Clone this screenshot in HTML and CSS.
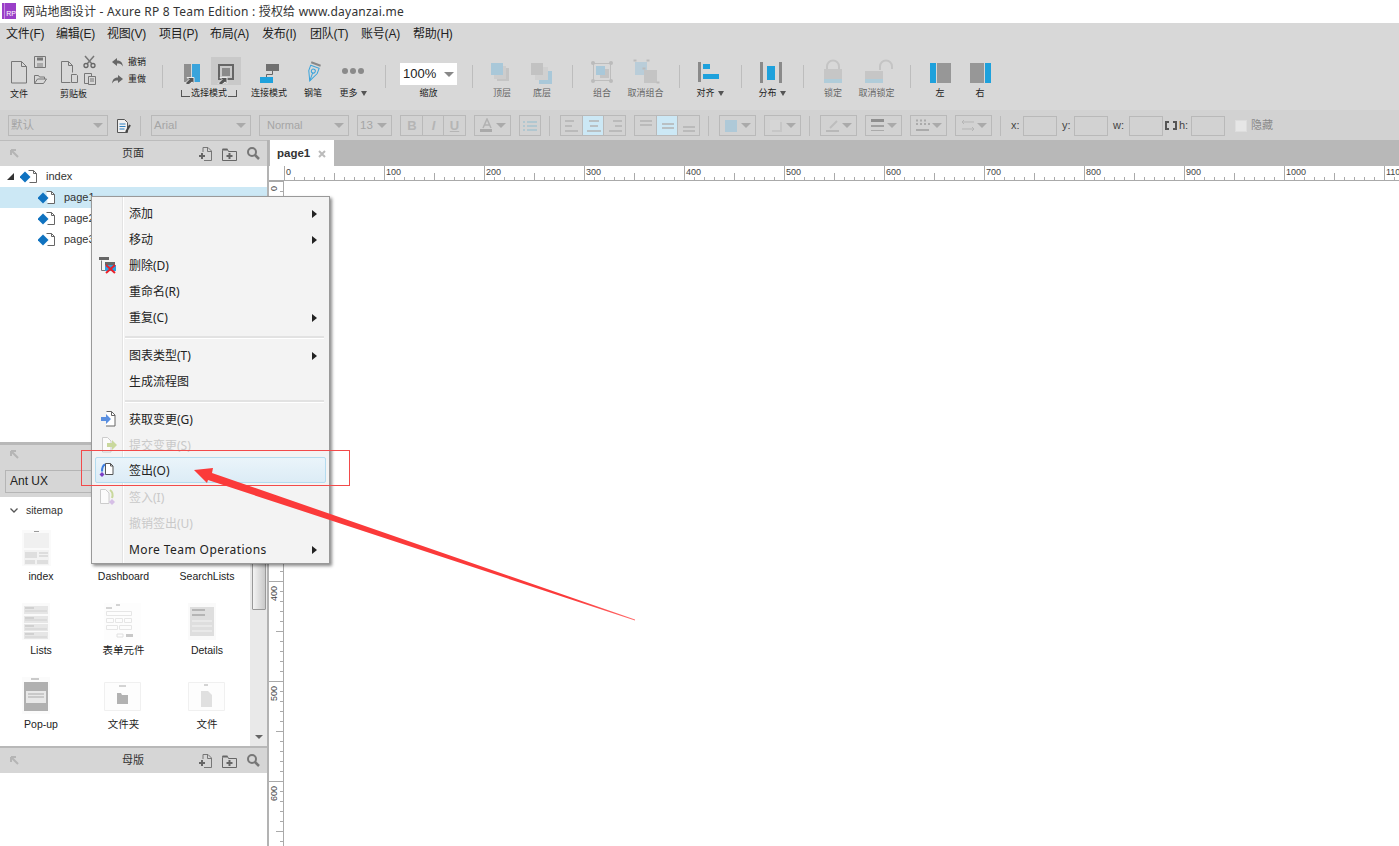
FILE: index.html
```html
<!DOCTYPE html>
<html lang="zh-CN">
<head>
<meta charset="utf-8">
<title>网站地图设计 - Axure RP 8 Team Edition</title>
<link rel="stylesheet" href="styles.css">
</head>
<body>
<svg class="defs" aria-hidden="true">
  <symbol id="tree" viewBox="0 0 18 16">
    <path d="M8.500 1.500h5l3 3v9h-7" fill="#fff" stroke="#666"/>
    <path d="M13.500 1.500v3h3" fill="none" stroke="#666"/>
    <path d="M5 2.500l5.500 5.500-5.500 5.500-5.500-5.500z" fill="#0f72c0"/>
  </symbol>
  <symbol id="back" viewBox="0 0 9 9"><path d="M1 1l7 7M1 1h5M1 1v5" fill="none" stroke="#b5b5b5" stroke-width="2"/></symbol>
  <symbol id="addp" viewBox="0 0 13 14">
    <path d="M4 5V.5h5l3.500 3.500v9.500H5" fill="none" stroke="#777"/><path d="M8.500.5v4h4" fill="none" stroke="#777"/>
    <path d="M3 6v6M0 9h6" stroke="#666" stroke-width="2"/>
  </symbol>
  <symbol id="addf" viewBox="0 0 15 14">
    <path d="M.5 3.500v10h14v-9h-8l-1-2h-5z" fill="none" stroke="#666"/><path d="M.5 2.500h5" stroke="#666" stroke-width="2"/>
    <path d="M7.500 6v6M4.500 9h6" stroke="#666" stroke-width="2"/>
  </symbol>
  <symbol id="find" viewBox="0 0 13 13">
    <circle cx="5" cy="5" r="4" fill="none" stroke="#777" stroke-width="2"/><path d="M8 8l4 4" stroke="#777" stroke-width="2.500"/>
  </symbol>
  <symbol id="cursor" viewBox="0 0 11 10">
    <path d="M1 9.500l4-4-2-2h7v6l-2-1.500-3.500 3z" fill="#555" stroke="#e8e8e8" stroke-width="1"/>
  </symbol>
</svg>

<header class="titlebar">
  <div class="logo"><span class="logo-bar"></span><span class="logo-rp">RP</span></div>
  <span class="title-text">网站地图设计 - Axure RP 8 Team Edition : 授权给 www.dayanzai.me</span>
</header>

<nav class="menubar">
  <span>文件(F)</span><span>编辑(E)</span><span>视图(V)</span><span>项目(P)</span><span>布局(A)</span><span>发布(I)</span><span>团队(T)</span><span>账号(A)</span><span>帮助(H)</span>
</nav>

<section class="toolbar">
  <div class="tool tool-left">
    <svg class="ico" width="50" height="28" viewBox="0 0 50 28">
      <path d="M11.500 4.500h10l5 5v16.500h-15z" fill="none" stroke="#777"/><path d="M21.500 4.500v5h5" fill="none" stroke="#777"/>
      <path d="M34.500-.5h11v11h-11z" fill="none" stroke="#777"/><path d="M37 .5h6v3h-6z" fill="#777"/><path d="M37 6h6v4h-6z" fill="#aaa"/>
      <path d="M34.500 26.500v-8h4l1 1.500h5v2M34.500 26.500l3-4.500h9l-3 4.500z" fill="none" stroke="#777"/>
    </svg>
    <span class="lbl">文件</span>
  </div>
  <div class="tool tool-left">
    <svg class="ico" width="50" height="28" viewBox="0 0 50 28">
      <path d="M11.500 4.500h7l4 4v7M11.500 4.500v21h9" fill="none" stroke="#777"/><path d="M18.500 4.500v4h4" fill="none" stroke="#777"/>
      <path d="M21.500 17.500h5l1 1v7h-6z" fill="#d8d8d8" stroke="#777"/>
      <path d="M35-1l7 8M44-1l-7 8" stroke="#777" stroke-width="1.500"/><circle cx="36" cy="8.500" r="2" fill="none" stroke="#666" stroke-width="1.300"/><circle cx="43" cy="8.500" r="2" fill="none" stroke="#666" stroke-width="1.300"/>
      <path d="M34.500 16.500h7v10h-7z" fill="none" stroke="#777"/><path d="M38.500 19.500h7v8h-7z" fill="#d8d8d8" stroke="#777"/><path d="M40 22h4M40 24h4" stroke="#777"/>
    </svg>
    <span class="lbl">剪贴板</span>
  </div>
  <div class="hist">
    <div class="hist-row"><svg width="11" height="9" viewBox="0 0 11 9"><path d="M0 4l5-4v2.500c3 0 5.500 1.500 6 6-1.500-2.500-3-3-6-3V8z" fill="#666"/></svg><span>撤销</span></div>
    <div class="hist-row"><svg width="11" height="9" viewBox="0 0 11 9"><path d="M11 4L6 0v2.500c-3 0-5.500 1.500-6 6 1.500-2.500 3-3 6-3V8z" fill="#666"/></svg><span>重做</span></div>
  </div>
  <i class="sep"></i>
  <div class="tool t-select">
    <svg class="ico" width="70" height="28" viewBox="0 0 70 28">
      <path d="M39 0h30v28H39z" fill="#c9c9c9"/>
      <path d="M12 7h7v18h-7z" fill="#8f8f8f"/><path d="M20 7h8v18h-8z" fill="#3aa4dc"/>
      <use href="#cursor" x="12" y="17" width="11" height="10"/>
      <path d="M47 8h14v14H47z" fill="none" stroke="#666" stroke-width="2"/><path d="M50 11h8v8h-8z" fill="#8a8a8a"/>
      <use href="#cursor" x="45" y="17" width="11" height="10"/>
    </svg>
    <span class="lbl lbl-bracket">选择模式</span>
  </div>
  <div class="tool t-connect">
    <svg class="ico" width="54" height="28" viewBox="0 0 54 28">
      <path d="M24 7h13v7H24z" fill="#707070"/><path d="M30.500 14v3.500h-6V20" fill="none" stroke="#666"/><path d="M18 20h13v6H18z" fill="#1ea1dc"/>
    </svg>
    <span class="lbl">连接模式</span>
  </div>
  <div class="tool t-pen">
    <svg class="ico" width="34" height="28" viewBox="0 0 34 28">
      <g transform="rotate(20 17 15)">
        <path d="M12.500 9.500h9v5.500l-4.500 9.500-4.500-9.500z" fill="none" stroke="#3aa4dc"/>
        <circle cx="17" cy="14" r="2" fill="none" stroke="#3aa4dc"/><path d="M17 16v8" stroke="#3aa4dc"/>
        <path d="M12 5.500h10v2H12z" fill="#888"/>
      </g>
    </svg>
    <span class="lbl">钢笔</span>
  </div>
  <div class="tool t-more">
    <svg class="ico" width="46" height="28" viewBox="0 0 46 28"><circle cx="15" cy="14" r="3" fill="#8a8a8a"/><circle cx="23" cy="14" r="3" fill="#8a8a8a"/><circle cx="31" cy="14" r="3" fill="#8a8a8a"/></svg>
    <span class="lbl">更多<b class="drop"></b></span>
  </div>
  <i class="sep sep-tight"></i>
  <div class="tool t-zoom">
    <div class="zoom-box"><span>100%</span><b class="caret caret-dark"></b></div>
    <span class="lbl">缩放</span>
  </div>
  <i class="sep"></i>
  <div class="tool dim">
    <svg class="ico" width="40" height="28" viewBox="0 0 40 28"><path d="M15 11h12v13H15z" fill="#c4c4c4"/><path d="M12 9h12v13H12z" fill="#cdcdcd"/><path d="M9 6h12v12H9z" fill="#a9c8d9"/></svg>
    <span class="lbl">顶层</span>
  </div>
  <div class="tool dim">
    <svg class="ico" width="40" height="28" viewBox="0 0 40 28"><path d="M17 14h13v13H17z" fill="#a9c8d9"/><path d="M13 10h13v13H13z" fill="#d0d0d0"/><path d="M9 6h12v12H9z" fill="#c2c2c2"/></svg>
    <span class="lbl">底层</span>
  </div>
  <i class="sep"></i>
  <div class="tool dim">
    <svg class="ico" width="40" height="28" viewBox="0 0 40 28"><path d="M11.500 6.500h17v17h-17z" fill="none" stroke="#bdbdbd"/><path d="M18 12h9v9h-9z" fill="#c4c4c4"/><path d="M14 9h9v9h-9z" fill="#a9c8d9"/><circle cx="11" cy="6" r="2" fill="#bbb"/><circle cx="29" cy="6" r="2" fill="#bbb"/><circle cx="11" cy="24" r="2" fill="#bbb"/><circle cx="29" cy="24" r="2" fill="#bbb"/></svg>
    <span class="lbl">组合</span>
  </div>
  <div class="tool t-w47 dim">
    <svg class="ico" width="47" height="28" viewBox="0 0 47 28"><path d="M13 5h12v13H13z" fill="#b9cdd9"/><path d="M22 13h13v13H22z" fill="#c4c4c4"/><path d="M11.500 3.500h3M24.500 3.500h3M20.500 11.500h3M34.500 25.500h3" stroke="#bbb" stroke-width="2"/></svg>
    <span class="lbl">取消组合</span>
  </div>
  <i class="sep"></i>
  <div class="tool t-w42">
    <svg class="ico" width="42" height="28" viewBox="0 0 42 28"><path d="M9 5h3v20H9z" fill="#8a8a8a"/><path d="M14 7h7v5h-7zM14 17h16v5H14z" fill="#1ea1dc"/></svg>
    <span class="lbl">对齐<b class="drop"></b></span>
  </div>
  <i class="sep"></i>
  <div class="tool t-w42">
    <svg class="ico" width="42" height="28" viewBox="0 0 42 28"><path d="M9 5h3v21H9zM28 5h3v21h-3z" fill="#8a8a8a"/><path d="M16 9h8v14h-8z" fill="#1ea1dc"/></svg>
    <span class="lbl">分布<b class="drop"></b></span>
  </div>
  <i class="sep"></i>
  <div class="tool dim">
    <svg class="ico" width="40" height="28" viewBox="0 0 40 28"><path d="M14 13V9.500a6 6 0 0 1 12 0V13" fill="none" stroke="#c4c4c4" stroke-width="2"/><path d="M11 12h18v10H11z" fill="#c6c6c6"/><path d="M11 22h18v4H11z" fill="#b0ccd9"/></svg>
    <span class="lbl">锁定</span>
  </div>
  <div class="tool t-w47 dim">
    <svg class="ico" width="47" height="28" viewBox="0 0 47 28"><path d="M27 13V9.500a6 6 0 0 1 12 0V12" fill="none" stroke="#c4c4c4" stroke-width="2"/><path d="M12 14h18v8H12z" fill="#c6c6c6"/><path d="M12 22h18v4H12z" fill="#b0ccd9"/></svg>
    <span class="lbl">取消锁定</span>
  </div>
  <i class="sep"></i>
  <div class="tool">
    <svg class="ico" width="40" height="28" viewBox="0 0 40 28"><path d="M10 6h6v20h-6z" fill="#1ea1dc"/><path d="M17 6h14v20H17z" fill="#979797"/></svg>
    <span class="lbl">左</span>
  </div>
  <div class="tool">
    <svg class="ico" width="40" height="28" viewBox="0 0 40 28"><path d="M10 6h14v20H10z" fill="#979797"/><path d="M25 6h6v20h-6z" fill="#1ea1dc"/></svg>
    <span class="lbl">右</span>
  </div>
</section>

<section class="formatbar">
  <div class="fb w100"><span>默认</span><b class="caret"></b></div>
  <svg class="fmt-ico" width="16" height="16" viewBox="0 0 16 16"><path d="M1.500 1.500h7l3 3v10h-10z" fill="#f0f0f0" stroke="#555"/><path d="M3.500 6h6M3.500 8.500h6M3.500 11h5" stroke="#2d7fc0"/><path d="M10 14l4-7" stroke="#444" stroke-width="2"/></svg>
  <i class="fsep"></i>
  <div class="fb w100"><span>Arial</span><b class="caret"></b></div>
  <div class="fb w90 indent"><span>Normal</span><b class="caret"></b></div>
  <div class="fb w35"><span>13</span><b class="caret"></b></div>
  <div class="fgroup"><span class="fcell strong">B</span><span class="fcell strong slant">I</span><span class="fcell strong under">U</span></div>
  <div class="fb w37"><svg width="14" height="15" viewBox="0 0 14 15"><path d="M3 10l4-9 4 9M4.500 7h5" fill="none" stroke="#b2b2b2" stroke-width="1.500"/><path d="M0 11h12v3H0z" fill="#aaa"/></svg><b class="caret"></b></div>
  <div class="fgroup single"><span class="fcell"><svg width="14" height="10" viewBox="0 0 14 10"><path d="M0 1h2M4 1h10M0 5h2M4 5h10M0 9h2M4 9h10" stroke="#a7c3cf" stroke-width="1.500"/></svg></span></div>
  <i class="fsep"></i>
  <div class="fgroup">
    <span class="fcell"><svg width="14" height="12" viewBox="0 0 14 12"><path d="M0 1h9M0 6h7M0 11h13" stroke="#b3b3b3" stroke-width="1.500"/></svg></span>
    <span class="fcell on"><svg width="14" height="12" viewBox="0 0 14 12"><path d="M2 1h10M3 6h8M0 11h14" stroke="#b3b3b3" stroke-width="1.500"/></svg></span>
    <span class="fcell"><svg width="14" height="12" viewBox="0 0 14 12"><path d="M5 1h9M7 6h7M1 11h13" stroke="#b3b3b3" stroke-width="1.500"/></svg></span>
  </div>
  <div class="fgroup">
    <span class="fcell"><svg width="14" height="12" viewBox="0 0 14 12"><path d="M1 1h12M1 5h12" stroke="#b3b3b3" stroke-width="1.500"/></svg></span>
    <span class="fcell on"><svg width="14" height="12" viewBox="0 0 14 12"><path d="M1 4h12M1 8h12" stroke="#b3b3b3" stroke-width="1.500"/></svg></span>
    <span class="fcell"><svg width="14" height="12" viewBox="0 0 14 12"><path d="M1 7h12M1 11h12" stroke="#b3b3b3" stroke-width="1.500"/></svg></span>
  </div>
  <i class="fsep"></i>
  <div class="fb w37"><svg width="12" height="12" viewBox="0 0 12 12"><path d="M0 0h12v12H0z" fill="#aec9d8"/></svg><b class="caret"></b></div>
  <div class="fb w37"><svg width="12" height="12" viewBox="0 0 12 12"><path d="M2 2h10v10H2z" fill="#c6c6c6"/><path d="M0 0h10v10H0z" fill="#d6d6d6"/></svg><b class="caret"></b></div>
  <i class="fsep"></i>
  <div class="fb w37"><svg width="14" height="14" viewBox="0 0 14 14"><path d="M4 9l7-7" stroke="#bdbdbd" stroke-width="2"/><path d="M0 12h13" stroke="#b8b8b8" stroke-width="2"/></svg><b class="caret"></b></div>
  <div class="fb w37"><svg width="14" height="14" viewBox="0 0 14 14"><path d="M0 0h13v3H0z" fill="#8f8f8f"/><path d="M0 6h13v2H0z" fill="#a0a0a0"/><path d="M0 11.500h13" stroke="#aaa"/></svg><b class="caret"></b></div>
  <div class="fb w37"><svg width="14" height="14" viewBox="0 0 14 14"><path d="M0 1.500h2M4 1.500h2M8 1.500h2M0 5h2M4 5h2M8 5h2M12 5h2" stroke="#aaa" stroke-width="2"/><path d="M0 11h13" stroke="#aaa" stroke-width="2"/></svg><b class="caret"></b></div>
  <div class="fb w37"><svg width="14" height="14" viewBox="0 0 14 14"><path d="M1 3h12M1 10h12M3 1L1 3l2 2M11 8l2 2-2 2" fill="none" stroke="#b5b5b5"/></svg><b class="caret"></b></div>
  <i class="fsep"></i>
  <div class="coords">
    <label class="cl w12">x:</label><span class="cin"></span>
    <label class="cl w12 ml5">y:</label><span class="cin"></span>
    <label class="cl w16 ml5">w:</label><span class="cin"></span>
    <svg class="link" width="12" height="9" viewBox="0 0 12 9"><path d="M4 1H1v7h3M8 1h3v7H8" fill="none" stroke="#555" stroke-width="2"/></svg>
    <label class="cl w12 ml2">h:</label><span class="cin"></span>
    <span class="check"></span><span class="hide-lbl">隐藏</span>
  </div>
</section>

<main class="workspace">
  <aside class="side">
    <section class="pages">
      <div class="phead phead-top">
        <svg class="p-back" width="9" height="9"><use href="#back"/></svg>
        <span class="p-title">页面</span>
        <svg class="p-a" width="13" height="14"><use href="#addp"/></svg>
        <svg class="p-b" width="15" height="14"><use href="#addf"/></svg>
        <svg class="p-c" width="13" height="13"><use href="#find"/></svg>
      </div>
      <div class="tree-row root"><b class="tree-tri"></b><svg width="18" height="16"><use href="#tree"/></svg><span>index</span></div>
      <div class="tree-row child sel"><svg width="18" height="16"><use href="#tree"/></svg><span>page1</span></div>
      <div class="tree-row child"><svg width="18" height="16"><use href="#tree"/></svg><span>page2</span></div>
      <div class="tree-row child"><svg width="18" height="16"><use href="#tree"/></svg><span>page3</span></div>
    </section>

    <section class="widgets">
      <div class="wtop">
        <svg class="w-back" width="9" height="9"><use href="#back"/></svg>
        <div class="wselect">Ant UX</div>
      </div>
      <div class="wbody">
        <div class="wlist">
          <div class="wgroup"><svg width="8" height="5" viewBox="0 0 8 5"><path d="M.5.5L4 4 7.500.5" fill="none" stroke="#555" stroke-width="1.300"/></svg><span>sitemap</span></div>
          <div class="wgrid">
            <div class="w-item">
              <svg class="th" width="38" height="38" viewBox="0 0 38 38"><path d="M0 2h29v36H0z" fill="#fafafa"/><path d="M2 5h25v15H2z" fill="#f0f0f0"/><path d="M12 3.500h5" stroke="#999"/><path d="M2 22h25v15H2z" fill="#f2f2f2"/><path d="M3 24h12v6H3zM3 32h10v4H3zM15 32h11v4H15z" fill="#dedede"/><path d="M17 25h9M17 28h9" stroke="#c8c8c8"/></svg>
              <span>index</span>
            </div>
            <div class="w-item"><svg class="th" width="38" height="38"></svg><span>Dashboard</span></div>
            <div class="w-item"><svg class="th" width="38" height="38"></svg><span>SearchLists</span></div>
            <div class="w-item">
              <svg class="th" width="38" height="38" viewBox="0 0 38 38"><path d="M0 1h28v37H0z" fill="#fafafa"/><path d="M2 4h24v8H2zM2 14h24v7H2zM2 22h24v7H2zM2 30h24v7H2z" fill="#e6e6e6"/><path d="M3 6h9M3 16h9M3 24h9M3 32h9" stroke="#bbb"/><path d="M3 9h22M3 18h22M3 27h22M3 35h22" stroke="#d0d0d0"/></svg>
              <span>Lists</span>
            </div>
            <div class="w-item">
              <svg class="th" width="38" height="38" viewBox="0 0 38 38"><path d="M0 1h37v37H0z" fill="#fdfdfd"/><path d="M2.500 9.500h25v4h-25zM2.500 16.500h7v4h-7zM11.500 16.500h7v4h-7zM20.500 16.500h7v4h-7zM2.500 23.500h11v4h-11zM15.500 23.500h12v4h-12z" fill="none" stroke="#e6e6e6"/><path d="M13 32h6v3h-6z" fill="none" stroke="#e0e0e0"/><path d="M22 32h7v3h-7z" fill="#c8c8c8"/><path d="M2 6h6M12 3h4" stroke="#aaa"/></svg>
              <span>表单元件</span>
            </div>
            <div class="w-item">
              <svg class="th" width="38" height="38" viewBox="0 0 38 38"><path d="M0 1h28v37H0z" fill="#fafafa"/><path d="M2 5h24v29H2z" fill="#dedede"/><path d="M4 8h13M4 13h13" stroke="#a8a8a8" stroke-width="1.500"/><path d="M4 19h20M4 24h20M4 29h20" stroke="#f4f4f4"/></svg>
              <span>Details</span>
            </div>
            <div class="w-item">
              <svg class="th" width="38" height="38" viewBox="0 0 38 38"><path d="M0 1h28v37H0z" fill="#fbfbfb"/><path d="M2 6h24v29H2z" fill="#b0b0b0"/><path d="M4 15h20v12H4z" fill="#e8e8e8"/><path d="M6 18h16M6 21h16" stroke="#aaa"/><path d="M9 3h8" stroke="#999"/></svg>
              <span>Pop-up</span>
            </div>
            <div class="w-item">
              <svg class="th" width="38" height="38" viewBox="0 0 38 38"><path d="M.5 6.500h36v28H.5z" fill="#fdfdfd" stroke="#f0f0f0"/><path d="M13 17h4l1 2h6v9H13z" fill="#b2b2b2"/><path d="M15 10h7" stroke="#aaa"/></svg>
              <span>文件夹</span>
            </div>
            <div class="w-item">
              <svg class="th" width="38" height="38" viewBox="0 0 38 38"><path d="M.5 6.500h36v28H.5z" fill="#fdfdfd" stroke="#f0f0f0"/><path d="M13 15h7l4 4v12H13z" fill="#e0e0e0"/><path d="M16 9h4" stroke="#aaa"/></svg>
              <span>文件</span>
            </div>
          </div>
        </div>
        <div class="scroll"><span class="thumb"></span><b class="scroll-down"></b></div>
      </div>
    </section>

    <section class="masters">
      <div class="phead">
        <svg class="p-back" width="9" height="9"><use href="#back"/></svg>
        <span class="p-title">母版</span>
        <svg class="p-a" width="13" height="14"><use href="#addp"/></svg>
        <svg class="p-b" width="15" height="14"><use href="#addf"/></svg>
        <svg class="p-c" width="13" height="13"><use href="#find"/></svg>
      </div>
    </section>
  </aside>

  <section class="stage">
    <div class="tabs"><div class="tab"><span>page1</span><svg width="8" height="8" viewBox="0 0 8 8"><path d="M1 1l6 6M7 1L1 7" stroke="#bbb" stroke-width="2"/></svg></div></div>
    <div class="hruler">
      <span class="corner"></span>
      <span class="hc">0</span><span class="hc">100</span><span class="hc">200</span><span class="hc">300</span><span class="hc">400</span><span class="hc">500</span><span class="hc">600</span><span class="hc">700</span><span class="hc">800</span><span class="hc">900</span><span class="hc">1000</span><span class="hc">1100</span>
    </div>
    <div class="canvas-row">
      <div class="vruler">
        <div class="vc"><span>0</span></div><div class="vc"><span>100</span></div><div class="vc"><span>200</span></div><div class="vc"><span>300</span></div><div class="vc"><span>400</span></div><div class="vc"><span>500</span></div><div class="vc"><span>600</span></div>
      </div>
      <div class="canvas"></div>
    </div>
  </section>
</main>

<div class="ctx">
  <ul class="ctx-list">
    <li class="arrow">添加</li>
    <li class="arrow">移动</li>
    <li><svg class="mi" width="18" height="18" viewBox="0 0 18 18"><path d="M0 1h10v3H0z" fill="#666"/><path d="M2.500 4.500v10h5" fill="none" stroke="#777"/><path d="M6 6h10v3H6z" fill="#666"/><path d="M6 9h11v6H6z" fill="#2c9fe0"/><path d="M7 9l9 8M16 9l-9 8" stroke="#e8202a" stroke-width="2"/></svg>删除(D)</li>
    <li>重命名(R)</li>
    <li class="arrow">重复(C)</li>
    <li class="hr"></li>
    <li class="arrow">图表类型(T)</li>
    <li>生成流程图</li>
    <li class="hr"></li>
    <li><svg class="mi" width="18" height="18" viewBox="0 0 18 18"><path d="M7.500 1.500h5l3.500 3.500v11h-9" fill="#fff" stroke="#666"/><path d="M12.500 1.500v4h3.500" fill="none" stroke="#666"/><path d="M2 7h5V4l5 5-5 5v-3H2z" fill="#5a8fe0"/></svg>获取变更(G)</li>
    <li class="off"><svg class="mi" width="18" height="18" viewBox="0 0 18 18"><path d="M3.500 1.500h5l3.500 3.500v11h-8.500z" fill="#fbfbfb" stroke="#ccc"/><path d="M8 7h5V4l5 5-5 5v-3H8z" fill="#c9d89c"/></svg>提交变更(S)</li>
    <li class="hot"><svg class="mi" width="18" height="18" viewBox="0 0 18 18"><path d="M8.500 1.500h5l2.500 2.500v8.500h-7.500z" fill="#fff" stroke="#555"/><path d="M13.500 1.500v2.500h2.500" fill="none" stroke="#555"/><path d="M8 2.500C5.500 3.500 5 7 5 9.500" fill="none" stroke="#3d7de0" stroke-width="2"/><path d="M5 10l2.500 2.500L5 15l-2.500-2.500z" fill="#7b3fc4"/></svg>签出(O)</li>
    <li class="off"><svg class="mi" width="18" height="18" viewBox="0 0 18 18"><path d="M1.500 1.500h5l3.500 3.500v10.500h-8.500z" fill="#fbfbfb" stroke="#ccc"/><path d="M11 2c3 2 3 5 2 8" fill="none" stroke="#c9d89c" stroke-width="2"/><path d="M13 11l3 3-3 3-3-3z" fill="#d6bfe6"/></svg>签入(I)</li>
    <li class="off">撤销签出(U)</li>
    <li class="arrow more">More Team Operations</li>
  </ul>
</div>

<div class="red-box"></div>
<svg class="red-arrow" width="460" height="160" viewBox="190 465 460 160" aria-hidden="true">
  <defs><linearGradient id="fade" x1="0" y1="0" x2="1" y2="0"><stop offset="0" stop-color="#fb3a3a"/><stop offset=".85" stop-color="#fb3a3a"/><stop offset="1" stop-color="#ff6a6a"/></linearGradient></defs>
  <path d="M194 470l19-2-1 5 423 146.500v1L208 480l-1 3z" fill="url(#fade)"/>
</svg>
</body>
</html>
```
FILE: styles.css
```css
* { box-sizing: border-box; }
html, body { margin: 0; height: 100%; }
body {
  position: relative;
  width: 1399px;
  height: 846px;
  overflow: hidden;
  display: flex;
  flex-direction: column;
  background: #fff;
  color: #222;
  font: 12px/1.2 "Liberation Sans", "Noto Sans CJK SC", sans-serif;
}
.defs { position: absolute; width: 0; height: 0; }
svg { display: block; flex: none; }

/* title */
.titlebar { height: 23px; display: flex; align-items: center; padding-left: 2px; background: #fff; flex: none; }
.logo { width: 14px; height: 16px; display: flex; margin-top: -1px; background: #9a3fc8; position: relative; }
.logo-bar { width: 3px; margin-left: 2px; background: #c58be0; }
.logo-rp { color: #fff; font-size: 7px; line-height: 1; margin: 7px 0 0 1px; }
.title-text { margin-left: 7px; font: 12px/1 "Noto Sans", "Noto Sans CJK SC", sans-serif; color: #333; letter-spacing: .21px; }

/* menu */
.menubar { height: 22px; flex: none; display: grid; grid-template-columns: 50px 51px 52px 51px 52px 48px 51px 52px auto; align-items: center; justify-content: start; padding-left: 6px; background: #d8d8d8; color: #222; font-size: 12px; letter-spacing: -.2px; }

/* toolbar */
.toolbar { height: 65px; flex: none; display: flex; align-items: flex-start; background: #d8d8d8; }
.tool { width: 40px; padding-top: 12px; display: flex; flex-direction: column; align-items: center; }
.ico { overflow: visible; }
.lbl { margin-top: 2px; height: 12px; font-size: 9px; line-height: 12px; white-space: nowrap; color: #222; display: flex; align-items: center; }
.tool-left { width: 50px; align-items: flex-start; }
.tool-left .lbl { margin: 3px 0 0 10px; }
.dim .lbl { color: #666; }
.hist { width: 52px; padding: 9px 0 0 12px; }
.hist-row { height: 17px; display: flex; align-items: center; gap: 5px; font-size: 9px; }
.sep { display: block; width: 1px; height: 23px; margin: 20px 9px 0 10px; background: #bdbdbd; flex: none; }
.sep-tight { margin-left: 9px; }
.t-select { width: 70px; }
.t-connect { width: 54px; }
.t-pen { width: 34px; }
.t-more { width: 46px; }
.t-zoom { width: 67px; }
.t-w47 { width: 47px; }
.t-w42 { width: 42px; }
.lbl-bracket { position: relative; left: 2px; gap: 1px; }
.lbl-bracket::before, .lbl-bracket::after { content: ""; width: 8px; height: 6px; margin-top: 1px; border-bottom: 1px solid #555; }
.lbl-bracket::before { border-left: 1px solid #555; }
.lbl-bracket::after { border-right: 1px solid #555; }
.drop { width: 0; height: 0; margin: 1px 0 0 3px; border: 3px solid transparent; border-top: 5px solid #555; border-bottom: 0; }
.zoom-box { width: 57px; height: 22px; margin: 6px 0 0; background: #fff; display: flex; align-items: center; justify-content: space-between; padding: 0 3px; font-size: 13px; color: #222; }
.caret { width: 0; height: 0; border: 5px solid transparent; border-top: 5px solid #aaa; border-bottom: 0; flex: none; }
.caret-dark { border-top-color: #888; }

/* format bar */
.formatbar { height: 30px; flex: none; display: flex; align-items: center; gap: 8px; padding: 1px 0 0 8px; background: #d2d2d2; }
.fb { height: 21px; border: 1px solid #b9b9b9; display: flex; align-items: center; justify-content: space-between; padding: 0 4px 0 2px; color: #a5a5a5; font-size: 11.500px; }
.fb svg { margin-left: 3px; }
.indent { padding-left: 7px; font-size: 11px; }
.w100 { width: 100px; } .w90 { width: 90px; } .w35 { width: 35px; } .w37 { width: 37px; }
.fsep { display: block; width: 2px; height: 20px; margin-right: 1px; background: linear-gradient(to right, #bbb 1px, transparent 1px); flex: none; }
.fgroup { display: flex; border: 1px solid #b9b9b9; height: 21px; }
.fcell { width: 22px; margin-left: -1px; border-left: 1px solid #b9b9b9; display: flex; align-items: center; justify-content: center; color: #b5b5b5; }
.fcell:first-child { margin-left: 0; border-left: 0; }
.single .fcell { width: 20px; }
.fcell.on { background: #cce8f5; }
.strong { font: bold 13px "Liberation Sans", sans-serif; }
.slant { font-style: italic; }
.under { text-decoration: underline; }
.coords { display: flex; align-items: center; color: #444; font-size: 11px; }
.cl { display: block; }
.w12 { width: 12px; } .w16 { width: 16px; } .ml5 { margin-left: 5px; } .ml2 { margin-left: 2px; }
.cin { width: 34px; height: 20px; border: 1px solid #b9b9b9; }
.link { margin-left: 2px; }
.check { width: 12px; height: 12px; margin-left: 10px; background: #e6e6e6; border: 1px solid #ddd; }
.hide-lbl { margin-left: 4px; color: #8a8a8a; }

/* workspace */
.workspace { flex: 1; min-height: 0; display: flex; }
.side { width: 269px; flex: none; display: flex; flex-direction: column; border-right: 2px solid #b3b3b3; background: #fff; }
.pages { height: 302px; flex: none; }
.phead { height: 25px; display: flex; align-items: center; position: relative; background: #d6d6d6; padding-left: 10px; }
.phead-top { height: 26px; border-top: 1px solid #bcbcbc; }
.p-title { position: absolute; left: 122px; font-size: 11px; color: #333; }
.p-a { margin-left: 180px; }
.p-b { margin-left: 10px; }
.p-c { margin-left: 10px; }
.tree-row { height: 21px; display: flex; align-items: center; font-size: 11px; color: #333; }
.tree-row span { margin-left: 8px; }
.root { padding-left: 7px; }
.tree-tri { width: 0; height: 0; margin-right: 6px; border-style: solid; border-width: 0 0 7px 7px; border-color: transparent transparent #333 transparent; }
.child { padding-left: 38px; }
.sel { background: #cce8f5; }

.widgets { height: 304px; flex: none; display: flex; flex-direction: column; border-top: 3px solid #b8b8b8; }
.wtop { height: 52px; flex: none; background: #d6d6d6; padding: 5px 0 0 10px; }
.wselect { margin: 11px 0 0 -5px; width: 240px; height: 23px; border: 1px solid #b5b5b5; padding-left: 4px; line-height: 21px; color: #222; font-size: 12px; }
.wbody { flex: 1; min-height: 0; display: flex; }
.wlist { flex: 1; min-width: 0; }
.wgroup { height: 26px; display: flex; align-items: center; gap: 8px; padding-left: 10px; font-size: 10.500px; color: #333; }
.wgrid { display: grid; grid-template-columns: 82px 83px 84px; grid-auto-rows: 74px; padding-top: 5px; }
.w-item { display: flex; flex-direction: column; align-items: center; font-size: 10.500px; color: #222; }
.th { margin-left: -1px; }
.w-item span { margin-top: 4px; }
.scroll { width: 17px; flex: none; background: #e9e9e9; display: flex; flex-direction: column; align-items: center; padding-bottom: 7px; }
.thumb { width: 14px; height: 113px; border: 1px solid #999; border-radius: 1px; background: linear-gradient(to right, #f4f4f4, #c9c9c9); }
.scroll-down { margin-top: auto; width: 0; height: 0; border: 4px solid transparent; border-top: 4px solid #666; border-bottom: 0; }
.masters { flex: 1; border-top: 2px solid #b8b8b8; }

.stage { flex: 1; min-width: 0; display: flex; flex-direction: column; overflow: hidden; }
.tabs { height: 26px; flex: none; background: #b8b8b8; }
.tab { width: 64px; height: 26px; margin-left: 1px; background: #fff; display: flex; align-items: center; gap: 8px; padding: 1px 0 0 7px; font-size: 11.500px; font-weight: 600; color: #333; }
.hruler { height: 15px; flex: none; display: flex; border-bottom: 1px solid #aaa; background: #fff; overflow: hidden; }
.corner { width: 15px; flex: none; }
.hc {
  width: 100px; flex: none; border-left: 1px solid #aaa; padding: 1px 0 0 1px;
  font-size: 9px; line-height: 11px; color: #444;
  background-image: linear-gradient(to right, #aaa 1px, transparent 1px), linear-gradient(to right, #aaa 1px, transparent 1px);
  background-size: 10px 3px, 50px 7px;
  background-repeat: repeat-x;
  background-position: 0 100%, 0 100%;
  background-origin: border-box;
}
.canvas-row { flex: 1; min-height: 0; display: flex; }
.vruler { width: 15px; flex: none; border-right: 1px solid #aaa; overflow: hidden; }
.vc {
  height: 100px; border-top: 1px solid #aaa; padding: 4px 0 0 1px;
  background-image: linear-gradient(to bottom, #aaa 1px, transparent 1px), linear-gradient(to bottom, #aaa 1px, transparent 1px);
  background-size: 3px 10px, 7px 50px;
  background-repeat: repeat-y;
  background-position: 100% 0, 100% 0;
  background-origin: border-box;
}
.vc span { display: block; writing-mode: vertical-rl; transform: rotate(180deg); font-size: 9px; line-height: 9px; color: #444; }
.canvas { flex: 1; background: #fff; }

/* context menu */
.ctx {
  position: absolute; left: 91px; top: 196px; width: 239px; height: 368px;
  border: 1px solid #999; background: #f3f3f3;
  box-shadow: 2px 2px 3px rgba(0,0,0,.45);
}
.ctx::before { content: ""; position: absolute; left: 30px; top: 0; bottom: 0; width: 1px; background: #e3e3e3; box-shadow: 1px 0 0 #fff; }
.ctx-list { list-style: none; margin: 0; padding: 4px 3px; position: relative; }
.ctx-list li { position: relative; height: 26px; line-height: 26px; padding-left: 34px; font: 12px/26px "Noto Sans", "Noto Sans CJK SC", sans-serif; color: #222; }
.ctx-list li.hr { height: 12px; margin: 0 0 0 30px; padding: 5px 0 0; }
.ctx-list li.hr::before { content: ""; display: block; margin-right: 2px; height: 2px; background: #e2e2e2; border-bottom: 1px solid #fff; }
.ctx-list li.off { color: #c9c9c9; }
.ctx-list li.hot { margin: -2px 0 2px; background: linear-gradient(#eaf4fa, #dcecf6); border: 1px solid #b4dcf0; border-radius: 2px; line-height: 24px; padding: 1px 0 0 33px; }
.ctx-list li.more { letter-spacing: .42px; }
.ctx-list li.arrow::after { content: ""; position: absolute; right: 9px; top: 9px; border: 4px solid transparent; border-left: 5px solid #222; border-right: 0; }
.mi { position: absolute; left: 4px; top: 3px; }
.hot .mi { left: 1px; top: 4px; }

.red-box { position: absolute; left: 81px; top: 450px; width: 269px; height: 36px; border: 1px solid #f24a4a; }
.red-arrow { position: absolute; left: 190px; top: 465px; }
```
